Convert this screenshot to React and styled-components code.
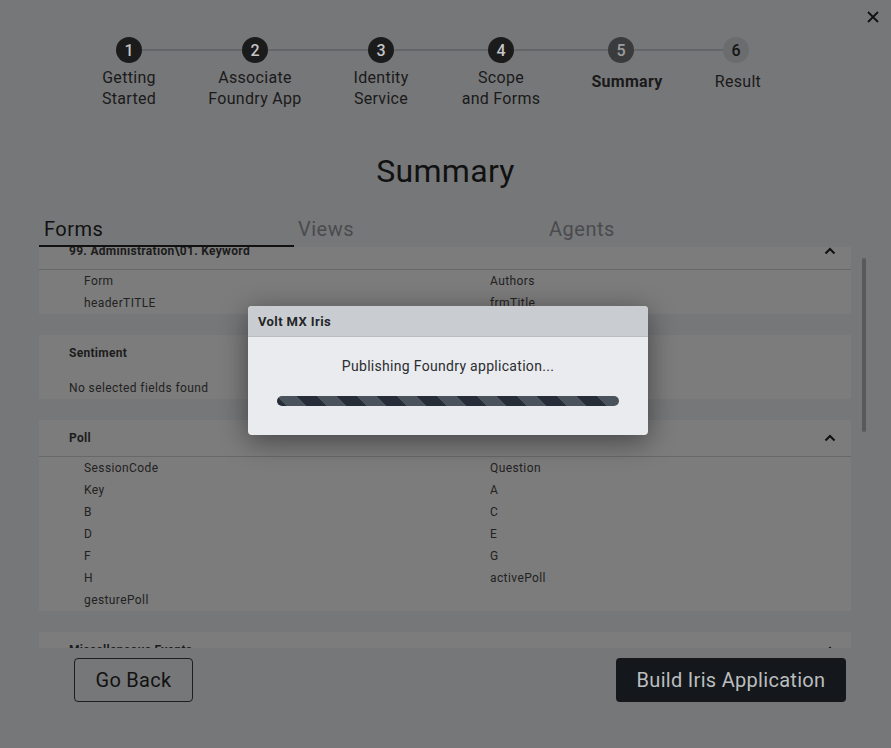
import React, { useLayoutEffect, useRef } from "react";
import styled, { createGlobalStyle } from "styled-components";

const GlobalStyle = createGlobalStyle`
  html, body { margin: 0; padding: 0; }
  body {
    background: #75767a;
    font-family: Roboto, "Noto Sans", "Liberation Sans", sans-serif;
    color: #1a1a1a;
    overflow: hidden;
  }
  * { box-sizing: border-box; }
`;

const Page = styled.div`
  position: relative;
  width: 891px;
  height: 748px;
  display: flex;
  flex-direction: column;
  background: #767779;
`;

const CloseButton = styled.button`
  position: absolute;
  top: 10px;
  right: 11px;
  width: 14px;
  height: 14px;
  padding: 0;
  border: 0;
  background: transparent;
  display: flex;
  align-items: center;
  justify-content: center;
  cursor: pointer;
`;

const Stepper = styled.div`
  position: relative;
  display: flex;
  margin-top: 37px;
  padding-left: 66px;
  &::before {
    content: "";
    position: absolute;
    left: 129px;
    width: 607px;
    top: 12px;
    height: 2px;
    background: #646568;
  }
`;

const Step = styled.div`
  position: relative;
  z-index: 1;
  flex: none;
  width: ${(p) => p.$w}px;
  display: flex;
  flex-direction: column;
  align-items: center;
`;

const Circle = styled.div`
  width: 26px;
  height: 26px;
  border-radius: 50%;
  display: flex;
  align-items: center;
  justify-content: center;
  font-size: 16px;
  font-weight: 500;
  background: ${(p) => (p.$state === "done" ? "#1b1b1c" : p.$state === "current" ? "#3a3b3c" : "#6b6c6e")};
  color: ${(p) => (p.$state === "done" ? "#c4c4c6" : p.$state === "current" ? "#9c9d9f" : "#141414")};
`;

const StepLabel = styled.div`
  margin-top: ${(p) => (p.$single ? 8 : 4)}px;
  padding-left: ${(p) => p.$shift || 0}px;
  font-size: 16px;
  line-height: 21px;
  letter-spacing: 0.3px;
  text-align: center;
  color: #1a1a1a;
  font-weight: ${(p) => (p.$active ? 700 : 400)};
`;

const Title = styled.h1`
  margin: 43px 0 0;
  text-align: center;
  font-size: 32px;
  line-height: 38px;
  font-weight: 400;
  letter-spacing: 0.3px;
  color: #111;
`;

const Tabs = styled.div`
  display: flex;
  margin: 27px 0 0 39px;
`;

const Tab = styled.div`
  width: ${(p) => p.$w}px;
  padding: 0 0 4px ${(p) => p.$pad}px;
  font-size: 20px;
  line-height: 24px;
  letter-spacing: 0.5px;
  color: ${(p) => (p.$active ? "#111" : "#4a4b4d")};
  border-bottom: 2px solid ${(p) => (p.$active ? "#111" : "transparent")};
`;

const ScrollArea = styled.div`
  display: flex;
  margin-left: 39px;
  height: 401px;
  flex: none;
`;

const Viewport = styled.div`
  width: 819px;
  height: 100%;
  overflow: hidden;
`;

const ScrollTrack = styled.div`
  width: 12px;
  padding: 11px 4px 0;
`;

const ScrollThumb = styled.div`
  width: 4px;
  height: 174px;
  border-radius: 2px;
  background: #58595b;
`;

const CardList = styled.div`
  display: flex;
  flex-direction: column;
  gap: 21px;
  padding: 14px 7px 20px 0;
`;

const Card = styled.section`
  background: #7c7c7c;
  width: 812px;
`;

const CardHeader = styled.div`
  height: 37px;
  display: flex;
  align-items: center;
  justify-content: space-between;
  padding: 0 15px 0 30px;
  font-size: 12px;
  font-weight: 700;
  letter-spacing: 0.3px;
  color: #1c1c1c;
  border-bottom: 1px solid ${(p) => (p.$divider ? "#67686a" : "transparent")};
`;

const Rows = styled.div`
  display: grid;
  grid-template-columns: 1fr 1fr;
`;

const Cell = styled.div`
  height: 22px;
  line-height: 22px;
  padding-left: 45px;
  font-size: 12px;
  letter-spacing: 0.4px;
  color: #222;
`;

const Empty = styled.div`
  height: 27px;
  line-height: 22px;
  padding: 5px 0 0 30px;
  font-size: 12px;
  letter-spacing: 0.4px;
  color: #222;
`;

const Footer = styled.div`
  display: flex;
  justify-content: space-between;
  align-items: center;
  margin-top: 10px;
  padding: 0 45px 0 74px;
`;

const GhostButton = styled.button`
  height: 44px;
  width: 119px;
  border: 1px solid #1e1e1f;
  border-radius: 4px;
  background: transparent;
  font-family: inherit;
  font-size: 20px;
  letter-spacing: 0.3px;
  color: #121212;
`;

const SolidButton = styled.button`
  height: 44px;
  width: 230px;
  border: 0;
  border-radius: 4px;
  background: #14181c;
  font-family: inherit;
  font-size: 20px;
  letter-spacing: 0.3px;
  color: #bcbdbf;
`;

const Dialog = styled.div`
  position: absolute;
  left: 248px;
  top: 306px;
  width: 400px;
  border-radius: 4px;
  overflow: hidden;
  background: #eaebee;
  box-shadow: 0 6px 28px rgba(0, 0, 0, 0.45);
`;

const DialogHeader = styled.div`
  height: 31px;
  display: flex;
  align-items: center;
  padding-left: 10px;
  background: #c9cdd1;
  border-bottom: 1px solid #b9bdc1;
  font-size: 13px;
  font-weight: 700;
  letter-spacing: 0.4px;
  color: #242628;
`;

const DialogBody = styled.div`
  display: flex;
  flex-direction: column;
  align-items: center;
  padding: 21px 0 29px;
`;

const DialogText = styled.div`
  font-size: 14px;
  line-height: 17px;
  letter-spacing: 0.3px;
  color: #2b2d30;
`;

const Progress = styled.div`
  margin-top: 21px;
  width: 342px;
  height: 10px;
  border-radius: 5px;
  background-color: #262d39;
  background-image: linear-gradient(
    45deg,
    #4a525c 25%,
    transparent 25%,
    transparent 50%,
    #4a525c 50%,
    #4a525c 75%,
    transparent 75%,
    transparent
  );
  background-size: 40px 40px;
`;

const Chevron = () => (
  <svg width="12" height="8" viewBox="0 0 12 8" aria-hidden="true">
    <polyline points="1.5,6.5 6,2 10.5,6.5" fill="none" stroke="#111" strokeWidth="2" />
  </svg>
);

const steps = [
  { n: 1, label: ["Getting", "Started"], w: 126, state: "done" },
  { n: 2, label: ["Associate", "Foundry App"], w: 126, state: "done" },
  { n: 3, label: ["Identity", "Service"], w: 126, state: "done" },
  { n: 4, label: ["Scope", "and Forms"], w: 114, state: "done" },
  { n: 5, label: ["Summary"], w: 126, state: "current", shift: 12 },
  { n: 6, label: ["Result"], w: 104, state: "todo", shift: 4 },
];

const cards = [
  { title: "99. Administration\\01. Keyword", rows: [["Form", "Authors"], ["headerTITLE", "frmTitle"]] },
  { title: "Sentiment", empty: true },
  {
    title: "Poll",
    rows: [
      ["SessionCode", "Question"],
      ["Key", "A"],
      ["B", "C"],
      ["D", "E"],
      ["F", "G"],
      ["H", "activePoll"],
      ["gesturePoll", ""],
    ],
  },
  {
    title: "Miscellaneous Events",
    rows: [
      ["onSessionStart", "onSessionEnd"],
      ["onFormLoad", "onFormClose"],
      ["onKeywordSearch", "onPollSubmit"],
      ["onSentimentChange", "onAgentConnect"],
      ["onViewChange", "onError"],
      ["onRefresh", "onLogout"],
      ["onNotification", "onSync"],
      ["onTimeout", ""],
    ],
  },
];

export default function App() {
  const scrollRef = useRef(null);
  useLayoutEffect(() => {
    if (scrollRef.current) scrollRef.current.scrollTop = 28;
  }, []);

  return (
    <>
      <GlobalStyle />
      <Page>
        <CloseButton aria-label="Close">
          <svg width="12" height="12" viewBox="0 0 12 12">
            <path d="M1 1L11 11M11 1L1 11" stroke="#111" strokeWidth="1.8" />
          </svg>
        </CloseButton>

        <Stepper>
          {steps.map((s) => (
            <Step key={s.n} $w={s.w}>
              <Circle $state={s.state}>{s.n}</Circle>
              <StepLabel
                $single={s.label.length === 1}
                $active={s.state === "current"}
                $shift={s.shift}
              >
                {s.label.map((l, i) => (
                  <div key={i}>{l}</div>
                ))}
              </StepLabel>
            </Step>
          ))}
        </Stepper>

        <Title>Summary</Title>

        <Tabs>
          <Tab $active $w={255} $pad={5}>Forms</Tab>
          <Tab $w={251} $pad={4}>Views</Tab>
          <Tab $w={255} $pad={4}>Agents</Tab>
        </Tabs>

        <ScrollArea>
          <Viewport ref={scrollRef}>
            <CardList>
              {cards.map((c) => (
                <Card key={c.title}>
                  <CardHeader $divider={!c.empty}>
                    <span>{c.title}</span>
                    {!c.empty && <Chevron />}
                  </CardHeader>
                  {c.empty ? (
                    <Empty>No selected fields found</Empty>
                  ) : (
                    <Rows>
                      {c.rows.map((r, i) => (
                        <React.Fragment key={i}>
                          <Cell>{r[0]}</Cell>
                          <Cell>{r[1]}</Cell>
                        </React.Fragment>
                      ))}
                    </Rows>
                  )}
                </Card>
              ))}
            </CardList>
          </Viewport>
          <ScrollTrack>
            <ScrollThumb />
          </ScrollTrack>
        </ScrollArea>

        <Footer>
          <GhostButton>Go Back</GhostButton>
          <SolidButton>Build Iris Application</SolidButton>
        </Footer>

        <Dialog role="dialog">
          <DialogHeader>Volt MX Iris</DialogHeader>
          <DialogBody>
            <DialogText>Publishing Foundry application...</DialogText>
            <Progress />
          </DialogBody>
        </Dialog>
      </Page>
    </>
  );
}
